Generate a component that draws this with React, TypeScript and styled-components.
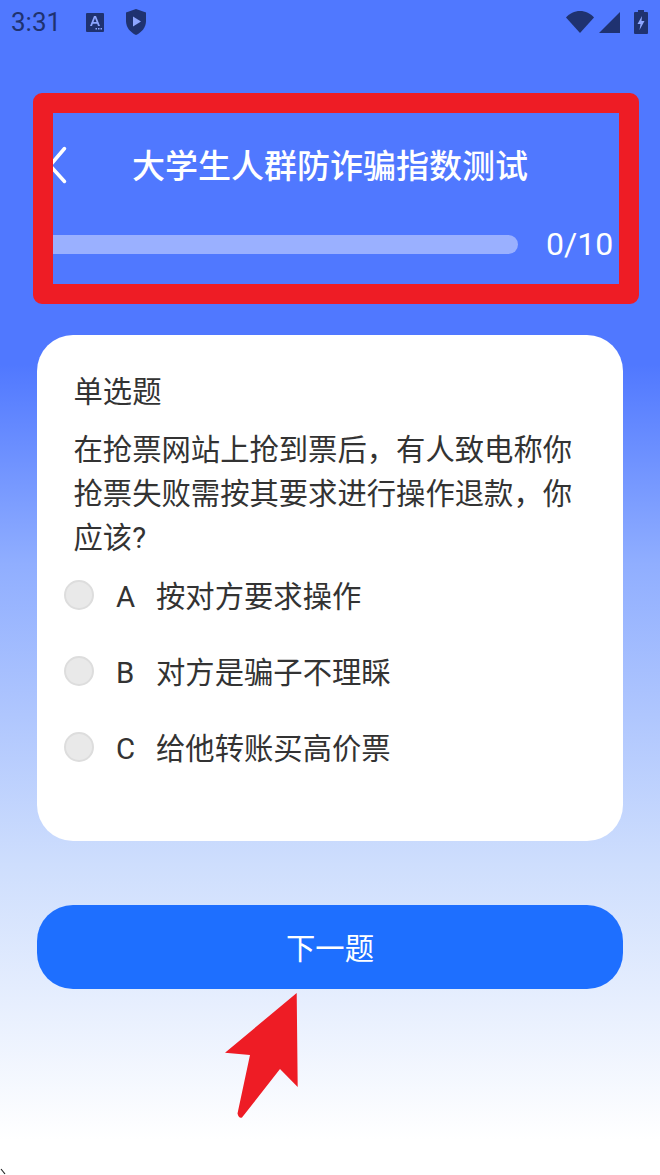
import React from "react";
import styled, { createGlobalStyle } from "styled-components";

const OPTIONS = [
  { key: "A", text: "按对方要求操作" },
  { key: "B", text: "对方是骗子不理睬" },
  { key: "C", text: "给他转账买高价票" },
];

const GlobalStyle = createGlobalStyle`
  html, body {
    margin: 0;
    padding: 0;
  }
  body {
    font-family: Roboto, "Noto Sans CJK SC", sans-serif;
  }
`;

const Page = styled.div`
  position: relative;
  width: 660px;
  height: 1175px;
  overflow: hidden;
  background: linear-gradient(
    180deg,
    #5078ff 0%,
    #5078ff 31%,
    #90aeff 48%,
    #cedefd 73.6%,
    #ffffff 97%
  );
`;

const StatusBar = styled.div`
  display: flex;
  align-items: center;
  height: 44px;
  padding: 0 12px 0 11px;
  color: #1f3270;
`;

const Time = styled.span`
  font-size: 26px;
  width: 75px;
`;

const StatusLeft = styled.div`
  display: flex;
  align-items: center;
  gap: 21px;
`;

const StatusRight = styled.div`
  display: flex;
  align-items: center;
  margin-left: auto;
  gap: 5px;
`;

const BatteryIcon = styled.svg`
  margin-left: 9px;
`;

const Content = styled.div`
  display: flex;
  flex-direction: column;
  padding: 0 37px;
`;

const Header = styled.div`
  display: grid;
  grid-template-columns: 1fr auto 1fr;
  align-items: center;
  height: 48px;
  margin-top: 97px;
`;

const BackIcon = styled.svg`
  margin-left: 10px;
`;

const Title = styled.h1`
  margin: 0;
  padding-top: 3px;
  font-size: 33px;
  font-weight: 500;
  color: #ffffff;
  line-height: 45px;
`;

const ProgressRow = styled.div`
  display: flex;
  align-items: center;
  height: 40px;
  margin-top: 35px;
`;

const Track = styled.div`
  width: 481px;
  height: 19px;
  border-radius: 10px;
  background: #9ab0ff;
`;

const Count = styled.span`
  margin-left: 28px;
  font-size: 32px;
  color: #ffffff;
`;

const Card = styled.div`
  height: 506px;
  box-sizing: border-box;
  margin-top: 71px;
  padding: 35px 36.5px 0;
  border-radius: 36px;
  background: #ffffff;
  color: #333333;
  font-size: 29.33px;
`;

const QuestionType = styled.div`
  line-height: 44px;
`;

const QuestionText = styled.div`
  margin-top: 14px;
  line-height: 44px;
`;

const OptionList = styled.div`
  display: flex;
  flex-direction: column;
  margin: -3px 0 0 -9.5px;
`;

const OptionRow = styled.div`
  display: flex;
  align-items: center;
  height: 76px;
`;

const Radio = styled.span`
  width: 30px;
  height: 30px;
  box-sizing: border-box;
  border: 2px solid #dddddd;
  border-radius: 50%;
  background: #e9e9e9;
`;

const OptionKey = styled.span`
  width: 41px;
  margin-left: 22px;
  padding-top: 3px;
  color: #333333;
`;

const OptionText = styled.span`
  margin-left: -1px;
  padding-bottom: 3px;
`;

const NextButton = styled.button`
  height: 84px;
  margin-top: 64px;
  padding: 0 0 3px;
  border: none;
  border-radius: 36px;
  background: #1e6fff;
  color: #ffffff;
  font-family: inherit;
  font-size: 29.33px;
`;

const RedFrame = styled.div`
  position: absolute;
  left: 33px;
  top: 93px;
  width: 606px;
  height: 211px;
  box-sizing: border-box;
  border: 20px solid #ee1c25;
  border-radius: 9px;
`;

const RedArrow = styled.svg`
  position: absolute;
  left: 220px;
  top: 990px;
`;

const CornerMark = styled.svg`
  position: absolute;
  left: 0;
  bottom: 0;
`;

export default function App() {
  return (
    <Page>
      <GlobalStyle />
      <StatusBar>
        <Time>3:31</Time>
        <StatusLeft>
          <svg width="18" height="19" viewBox="0 0 18 19">
            <path d="M1 0h16a1 1 0 0 1 1 1v17a1 1 0 0 1-1 1H1a1 1 0 0 1-1-1V1a1 1 0 0 1 1-1z" fill="#1f3270" />
            <path d="M4 13 8 3h2l4 10h-2l-.8-2.200H6.800L6 13zM7.500 9h3L9 5z" fill="#8ea6ff" />
            <path d="M9.500 15h1.500v1.500H9.500zM12 15h1.500v1.500H12zM14.500 15H16v1.500h-1.500z" fill="#8ea6ff" />
          </svg>
          <svg width="22" height="26" viewBox="0 0 22 26">
            <path d="M11 0 21 3.500V12c0 6.500-4.200 11.300-10 14C5.200 23.300 1 18.500 1 12V3.500z" fill="#1f3270" />
            <path d="M8 7.500 16 12.500 8 17.500z" fill="#8ea6ff" />
          </svg>
        </StatusLeft>
        <StatusRight>
          <svg width="28" height="22" viewBox="0 0 28 22">
            <path d="M0 6.500C3.500 2.500 8.500 0 14 0s10.500 2.500 14 6.500L14 22z" fill="#1f3270" />
          </svg>
          <svg width="21" height="21" viewBox="0 0 21 21">
            <path d="M21 0v21H0z" fill="#1f3270" />
          </svg>
          <BatteryIcon width="14" height="24" viewBox="0 0 14 24">
            <path d="M4 0h6v2h3a1 1 0 0 1 1 1v20a1 1 0 0 1-1 1H1a1 1 0 0 1-1-1V3a1 1 0 0 1 1-1h3z" fill="#1f3270" />
            <path d="M8 6 3.500 14H6.500L5.500 20 10.500 11H7.500z" fill="#8ea6ff" />
          </BatteryIcon>
        </StatusRight>
      </StatusBar>
      <Content>
        <Header>
          <BackIcon width="20" height="38" viewBox="0 0 20 38">
            <path d="M17.500 2.500 3 19.500 17.500 35.500" fill="none" stroke="#ffffff" strokeWidth="3.500" strokeLinecap="round" />
          </BackIcon>
          <Title>大学生人群防诈骗指数测试</Title>
        </Header>
        <ProgressRow>
          <Track />
          <Count>0/10</Count>
        </ProgressRow>
        <Card>
          <QuestionType>单选题</QuestionType>
          <QuestionText>
            在抢票网站上抢到票后，有人致电称你抢票失败需按其要求进行操作退款，你应该?
          </QuestionText>
          <OptionList>
            {OPTIONS.map((option) => (
              <OptionRow key={option.key}>
                <Radio />
                <OptionKey>{option.key}</OptionKey>
                <OptionText>{option.text}</OptionText>
              </OptionRow>
            ))}
          </OptionList>
        </Card>
        <NextButton>下一题</NextButton>
      </Content>
      <RedFrame />
      <RedArrow width="80" height="130" viewBox="0 0 80 130">
        <path
          d="M76.700 3 5 62.700 30 65 17.500 123.500Q19 129 22 127.500L60 79 77.700 97z"
          fill="#ee1c25"
        />
      </RedArrow>
      <CornerMark width="7" height="7" viewBox="0 0 7 7">
        <path d="M1 1 5 6" stroke="#222222" strokeWidth="1.200" fill="none" />
      </CornerMark>
    </Page>
  );
}
